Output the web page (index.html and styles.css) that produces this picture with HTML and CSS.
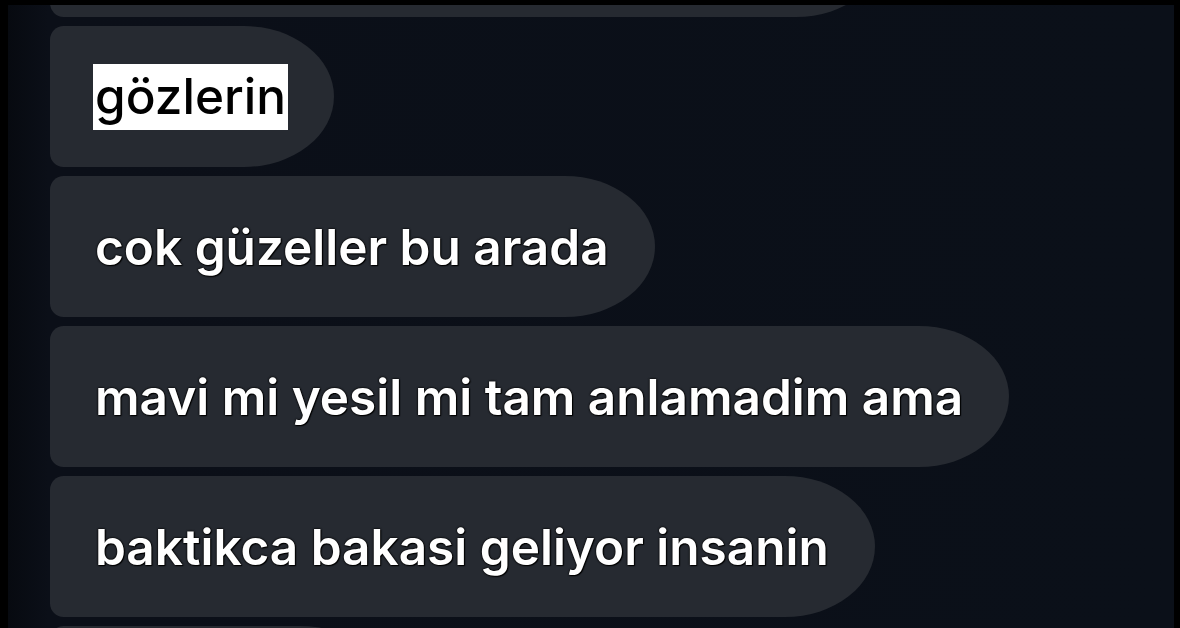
FILE: index.html
```html
<!DOCTYPE html>
<html lang="tr">
<head>
<meta charset="utf-8">
<link rel="stylesheet" href="styles.css">
</head>
<body>
<div class="frame">
  <div class="thread">
    <div class="bubble partial w-top"><span class="msg">&nbsp;</span></div>
    <div class="bubble"><span class="msg hl">gözlerin</span></div>
    <div class="bubble"><span class="msg">cok güzeller bu arada</span></div>
    <div class="bubble"><span class="msg">mavi mi yesil mi tam anlamadim ama</span></div>
    <div class="bubble"><span class="msg">baktikca bakasi geliyor insanin</span></div>
    <div class="bubble w-bottom"><span class="msg">&nbsp;</span></div>
  </div>
</div>
</body>
</html>
```

FILE: styles.css
```css
html, body {
  margin: 0;
  padding: 0;
  background: #000;
  height: 100%;
  overflow: hidden;
}
.frame {
  margin: 5px 6px 0 8px;
  height: 623px;
  background: linear-gradient(90deg, #070a10 0px, #0b0f18 40px, #0b1019 100%);
  overflow: hidden;
}
.thread {
  display: flex;
  flex-direction: column;
  align-items: flex-start;
  gap: 9px;
  padding-left: 42px;
}
.bubble {
  box-sizing: border-box;
  flex: none;
  height: 141px;
  display: flex;
  align-items: center;
  padding: 0 46px 0 45px;
  background: #262a31;
  border-radius: 14px 92px 92px 14px / 14px 72px 72px 14px;
  font-family: Inter, "Liberation Sans", sans-serif;
  font-weight: 600;
  font-size: 49.5px;
  color: #fff;
}
.msg {
  text-shadow: 0 0 2px #000, 0 0 2px #000, 1px 1px 1px #000;
  white-space: nowrap;
}
.hl {
  background: #fff;
  color: #000;
  font-weight: 500;
  text-shadow: none;
  padding: 2px 2px 4px 2px;
  margin-left: -2px;
}
.partial {
  margin-top: -129px;
}
.w-top { width: 836px; }
.w-bottom { width: 340px; }
```
